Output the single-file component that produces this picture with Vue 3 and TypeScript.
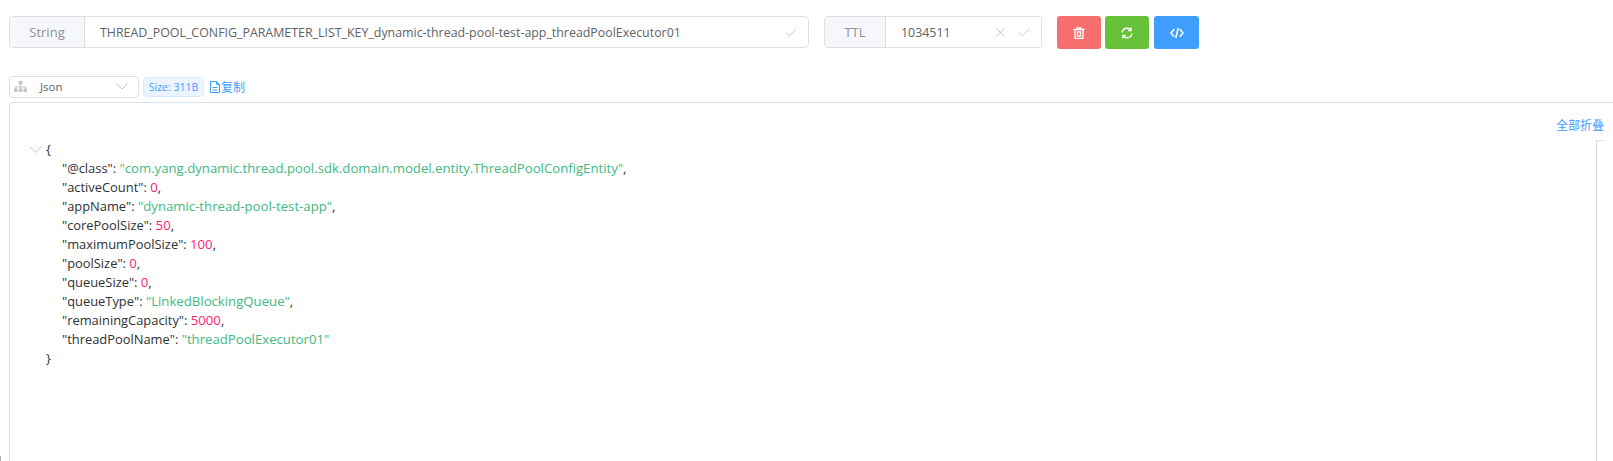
<script setup lang="ts">
type Line = { key: string; value: string; kind: 'str' | 'num'; comma: boolean }
const lines: Line[] = [
  { key: '@class', value: '"com.yang.dynamic.thread.pool.sdk.domain.model.entity.ThreadPoolConfigEntity"', kind: 'str', comma: true },
  { key: 'activeCount', value: '0', kind: 'num', comma: true },
  { key: 'appName', value: '"dynamic-thread-pool-test-app"', kind: 'str', comma: true },
  { key: 'corePoolSize', value: '50', kind: 'num', comma: true },
  { key: 'maximumPoolSize', value: '100', kind: 'num', comma: true },
  { key: 'poolSize', value: '0', kind: 'num', comma: true },
  { key: 'queueSize', value: '0', kind: 'num', comma: true },
  { key: 'queueType', value: '"LinkedBlockingQueue"', kind: 'str', comma: true },
  { key: 'remainingCapacity', value: '5000', kind: 'num', comma: true },
  { key: 'threadPoolName', value: '"threadPoolExecutor01"', kind: 'str', comma: false },
]
</script>

<template>
  <div class="page">
    <div class="top">
      <div class="group key-group">
        <div class="prefix key-prefix">String</div>
        <div class="field">
          <span class="value">THREAD_POOL_CONFIG_PARAMETER_LIST_KEY_dynamic-thread-pool-test-app_threadPoolExecutor01</span>
          <svg class="check" viewBox="0 0 14 10"><path d="M1 5l4 4 8-8" /></svg>
        </div>
      </div>
      <div class="group ttl-group">
        <div class="prefix ttl-prefix">TTL</div>
        <div class="field">
          <span class="value">1034511</span>
          <svg class="cross" viewBox="0 0 10 10"><path d="M.5.5l9 9M9.5.5l-9 9" /></svg>
          <svg class="check" viewBox="0 0 14 10"><path d="M1 5l4 4 8-8" /></svg>
        </div>
      </div>
      <div class="buttons">
        <button class="btn red">
          <svg viewBox="0 0 12 12"><path d="M.5 2.500h11M4 2.500V.8h4v1.700M2 2.500v9h8v-9M4.500 4.800v4.400h3V4.800z" /></svg>
        </button>
        <button class="btn green">
          <svg viewBox="0 0 12 12"><path d="M1.200 5.500C1.500 2.800 3.300 1.200 6 1.200c1.500 0 2.600.5 3.400 1.500M10.800 6.500c-.3 2.700-2.100 4.300-4.800 4.300-1.500 0-2.600-.5-3.400-1.500M10 .6v3H7M2 11.400v-3h3" /></svg>
        </button>
        <button class="btn blue">
          <svg class="code" viewBox="0 0 14 12"><path d="M4.200 2.200L1 6l3.200 3.800M9.800 2.200L13 6l-3.200 3.800M8.200 1L5.800 11" /></svg>
        </button>
      </div>
    </div>

    <div class="bar">
      <div class="select">
        <svg class="tree" viewBox="0 0 13 11"><path d="M4.500 0h4v3.500h-4zM0 7.500h3.500V11H0zM4.700 7.500h3.600V11H4.700zM9.500 7.500H13V11H9.500zM6 3.500h1v2h4.800v2h-1V6.500H7v1H6v-1H2.200v1h-1v-2H6z" /></svg>
        <span class="select-text">Json</span>
        <svg class="arrow" viewBox="0 0 12 7"><path d="M.5.5L6 6 11.500.5" /></svg>
      </div>
      <span class="tag">Size: 311B</span>
      <span class="copy">
        <svg viewBox="0 0 10 12"><path d="M.5.5h6l3 3v8H.5zM6.500.5v3h3M2.500 6.500h5M2.500 9h5" /></svg>复制
      </span>
    </div>

    <div class="viewer">
      <div class="fold">全部折叠</div>
      <div class="json">
        <div class="row brace">
          <svg class="tree-arrow" viewBox="0 0 13 7"><path d="M.5.5L6.500 6.500 12.500.5" /></svg>{
        </div>
        <div v-for="l in lines" :key="l.key" class="row item">
          <span>"{{ l.key }}"</span>: <span :class="l.kind">{{ l.value }}</span><span v-if="l.comma">,</span>
        </div>
        <div class="row brace">}</div>
      </div>
      <div class="gutter"></div>
    </div>
    <div class="corner"></div>
  </div>
</template>

<style>
html, body { margin: 0; height: 461px; overflow: hidden; background: #fff; }
</style>

<style scoped>
.page {
  position: relative;
  height: 461px;
  overflow: hidden;
  padding: 16px 0 0 9px;
  box-sizing: border-box;
  font-family: "Open Sans", "Noto Sans CJK SC", sans-serif;
  color: #303133;
}
.top { display: flex; height: 32px; align-items: flex-start; }
.group {
  display: flex;
  height: 32px;
  box-sizing: border-box;
  border: 1px solid #dcdfe6;
  border-radius: 4px;
  font-size: 13px;
}
.key-group { width: 800px; }
.ttl-group { width: 218px; margin-left: 15px; }
.prefix {
  flex: none;
  display: flex;
  align-items: center;
  justify-content: center;
  background: #f5f7fa;
  color: #909399;
  border-right: 1px solid #dcdfe6;
  border-radius: 3px 0 0 3px;
  box-sizing: border-box;
}
.key-prefix { width: 75px; }
.ttl-prefix { width: 61px; }
.field {
  flex: 1;
  display: flex;
  align-items: center;
  padding: 0 11px 0 15px;
  color: #606266;
  min-width: 0;
}
.value { flex: 1; white-space: nowrap; font-size: 12.4px; }
.check { width: 12px; height: 9px; }
.check path, .cross path { fill: none; stroke: #c0c4cc; stroke-width: 1.1; }
.cross { width: 9px; height: 9px; margin-right: 13px; }
.buttons { display: flex; gap: 4px; margin-left: 15px; }
.btn {
  width: 44px;
  height: 33px;
  padding: 0;
  border: 0;
  border-radius: 3px;
  display: flex;
  align-items: center;
  justify-content: center;
}
.btn svg { width: 12px; height: 12px; }
.btn .code { width: 14px; }
.btn path { fill: none; stroke: #fff; stroke-width: 1.300; }
.green path { stroke-width: 1.400; }
.blue path { stroke-width: 1.600; }
.red { background: #f76e6e; }
.green { background: #67c23a; }
.blue { background: #409eff; width: 45px; margin-left: 1px; }

.bar { display: flex; align-items: center; height: 23px; margin-top: 27px; }
.select {
  width: 130px;
  height: 22px;
  box-sizing: border-box;
  border: 1px solid #dcdfe6;
  border-radius: 4px;
  display: flex;
  align-items: center;
  padding: 0 10px 0 4px;
  font-size: 11.5px;
  color: #606266;
}
.tree { width: 13px; height: 11px; fill: #c0c4cc; }
.select-text { flex: 1; padding-left: 13px; }
.arrow { width: 12px; height: 7px; }
.arrow path { fill: none; stroke: #c0c4cc; stroke-width: 1; }
.tag {
  margin-left: 4px;
  width: 61px;
  height: 20px;
  box-sizing: border-box;
  border: 1px solid #d9ecff;
  border-radius: 4px;
  background: #ecf5ff;
  color: #409eff;
  font-size: 10.500px;
  display: flex;
  align-items: center;
  justify-content: center;
  white-space: nowrap;
}
.copy {
  margin-left: 6px;
  display: flex;
  align-items: center;
  font-size: 12px;
  color: #409eff;
}
.copy svg { width: 10px; height: 12px; margin-right: 1px; }
.copy path { fill: none; stroke: #409eff; stroke-width: 1; }

.viewer {
  position: relative;
  margin-top: 4px;
  height: 400px;
  border-top: 1px solid #dcdfe6;
  border-left: 1px solid #dcdfe6;
  border-top-left-radius: 4px;
}
.fold {
  position: absolute;
  top: 14px;
  right: 9px;
  font-size: 12px;
  line-height: 17px;
  color: #409eff;
}
.json {
  padding: 37px 0 0 36px;
  font-size: 12.900px;
  line-height: 19px;
  color: #303133;
}
.row { position: relative; white-space: pre-wrap; height: 19px; }
.item { padding-left: 16px; }
.tree-arrow { position: absolute; left: -17px; top: 6px; width: 13px; height: 7px; }
.tree-arrow path { fill: none; stroke: #c0c4cc; stroke-width: 1; }
.str { color: #42b983; font-size: 13.180px; }
.num { color: #fc1e70; font-size: 13.180px; }
.gutter {
  position: absolute;
  left: 1586px;
  top: 37px;
  width: 8px;
  height: 330px;
  border-left: 1px solid #d8d8d8;
  border-top: 1px solid #e4e4e4;
}
.corner {
  position: absolute;
  left: 0;
  top: 456px;
  width: 1px;
  height: 5px;
  background: #b0b0b0;
}
</style>
